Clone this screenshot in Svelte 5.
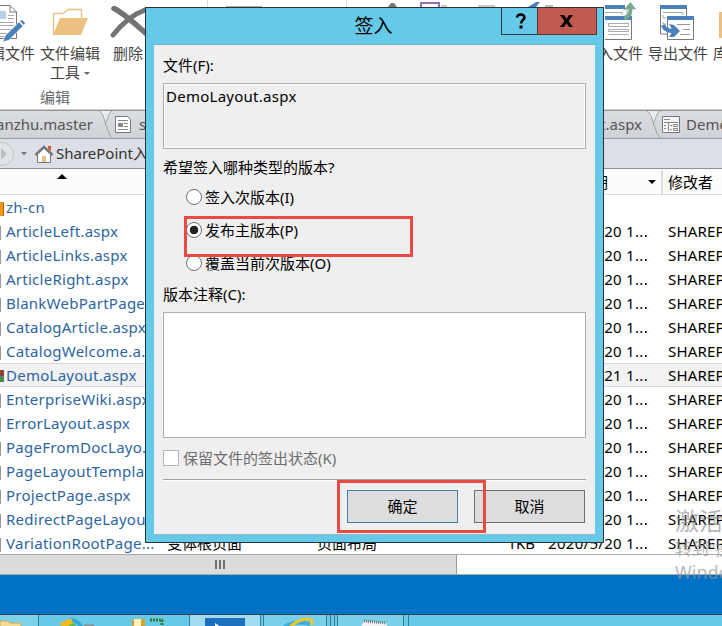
<script lang="ts">
	type Row = { name: string; kind?: string; day?: string };

	const rows: Row[] = [
		{ name: 'zh-cn', kind: 'folder' },
		{ name: 'ArticleLeft.aspx', day: '20' },
		{ name: 'ArticleLinks.aspx', day: '20' },
		{ name: 'ArticleRight.aspx', day: '20' },
		{ name: 'BlankWebPartPage...', day: '20' },
		{ name: 'CatalogArticle.aspx', day: '20' },
		{ name: 'CatalogWelcome.a...', day: '20' },
		{ name: 'DemoLayout.aspx', kind: 'selected', day: '21' },
		{ name: 'EnterpriseWiki.aspx', day: '20' },
		{ name: 'ErrorLayout.aspx', day: '20' },
		{ name: 'PageFromDocLayo...', day: '20' },
		{ name: 'PageLayoutTempla...', day: '20' },
		{ name: 'ProjectPage.aspx', day: '20' },
		{ name: 'RedirectPageLayou...', day: '20' },
		{ name: 'VariationRootPage...', day: '20' }
	];

	const versions = [
		{ value: 'minor', label: '签入次版本(I)' },
		{ value: 'major', label: '发布主版本(P)' },
		{ value: 'overwrite', label: '覆盖当前次版本(O)' }
	];

	let version = $state('major');
	let comment = $state('');
</script>

<div class="screen">
	<div class="ribbon">
		<div class="tool edit-file">
			<svg width="28" height="42" viewBox="0 0 28 42">
				<path d="M-4 5.500H10L16.500 12V38.500H-4" fill="#fff" stroke="#777" />
				<path d="M10 5.500V12H16.500" fill="none" stroke="#777" />
				<path d="M0 11H6V19H0z" fill="#b9cfe8" />
				<path d="M8 15.500H14M8 18.500H14M0 22.500H14M0 25.500H14M0 29.500H12M0 33.500H8M0 36.500H4" stroke="#aaa" />
				<path d="M5 36L19 22L23 26L9 40L3 42z" fill="#4a80bb" stroke="#fff" stroke-width=".5" />
				<path d="M20 21L22 20L25 23L24 25z" fill="#4a80bb" />
			</svg>
			<span>编辑文件</span>
		</div>
		<div class="tool edit-tools">
			<svg width="38" height="42" viewBox="0 0 38 42">
				<path d="M2.500 34V13.500H12L17 9.500H30.500V18" fill="none" stroke="#eac181" stroke-width="1.300" />
				<path d="M9 18H37L30 35H2z" fill="#eac181" />
			</svg>
			<span>文件编辑<br />工具<i class="caret"></i></span>
			<span class="group">编辑</span>
		</div>
		<div class="tool delete">
			<svg width="42" height="42" viewBox="0 0 42 42">
				<path d="M5 8.500C15 13 27 25 40 36" fill="none" stroke="#737373" stroke-width="5.500" stroke-linecap="round" />
				<path d="M4 35C12 25 22 15 36 10" fill="none" stroke="#737373" stroke-width="5" stroke-linecap="round" />
			</svg>
			<span>删除</span>
		</div>
		<div class="hidden-tools">
			<svg width="432" height="8" viewBox="0 0 432 8">
				<path d="M52.500 0V8M191.500 0V8" stroke="#ddd" />
				<path d="M71 6.500H107" stroke="#aaa" />
				<path d="M229 7H233L236 3H239L242 7H247" fill="#777" />
				<path d="M266 8V3H284V8" fill="none" stroke="#9a6bbd" stroke-width="2" />
				<path d="M286 6H292M323 6H340" stroke="#999" />
				<path d="M373 7L381 2H385L381 7z" fill="#4a80bb" />
				<path d="M390 6H398" stroke="#777" />
			</svg>
		</div>
		<div class="tool import">
			<svg width="36" height="42" viewBox="0 0 36 42">
				<path d="M0 5H20V9H0z" fill="#4a80bb" />
				<path d="M0 12.500H17V15M22 9V16" fill="none" stroke="#aaa" />
				<path d="M-2 16.500H26.500V39.500H-2z" fill="#fff" stroke="#777" />
				<path d="M0 16H27V20H0z" fill="#4a80bb" />
				<path d="M3.500 23.500H23.500V26.500H3.500zM3.500 29.500H23.500V31.500H3.500zM3.500 34.500H23.500" fill="none" stroke="#aaa" />
				<path d="M19 18C25 17 25.500 13 25.500 8" fill="none" stroke="#77a892" stroke-width="4" />
				<path d="M18.500 10L25.500 2L31.500 10L28 9H23z" fill="#77a892" />
			</svg>
			<span>导入文件</span>
		</div>
		<div class="tool export">
			<svg width="38" height="42" viewBox="0 0 38 42">
				<path d="M2.500 5.500H28.500V34H2.500z" fill="#fff" stroke="#777" />
				<path d="M2 5H29V9H2z" fill="#4a80bb" />
				<path d="M5 12.500H25V15M5 15V18H8M5 22V24H8M5 29H8" fill="none" stroke="#aaa" />
				<path d="M9.500 16.500H35.500V39.500H9.500z" fill="#fff" stroke="#777" />
				<path d="M9 16H36V20H9z" fill="#4a80bb" />
				<path d="M19 24.500H32M25 29.500H32M22 34.500H32" stroke="#999" />
				<path d="M5 25C7 31 13 31 17 31" fill="none" stroke="#4a80bb" stroke-width="4" />
				<path d="M11 24L16 25L22 31L16 37H11L15 31z" fill="#4a80bb" />
			</svg>
			<span>导出文件</span>
		</div>
		<div class="tool library">
			<div class="lib-icon"></div>
			<span>库</span>
		</div>
	</div>

	<div class="tabs">
		<div class="tab first"><span>shanzhu.master</span></div>
		<svg class="notch" width="15" height="28" viewBox="0 0 15 28">
			<path d="M0 0H13L7 11z" fill="#ebedf0" />
			<path d="M0 0C4 2 5 8 7 14C9 20 11 26 14 27.500M13 0C9 2 9 9 6.500 12" fill="none" stroke="#999da3" />
		</svg>
		<div class="tab second">
			<svg width="18" height="19" viewBox="0 0 18 19">
				<path d="M1.500 1.500H13.500L16.500 4.500V17.500H1.500z" fill="#fff" stroke="#777" />
				<path d="M4 5.500H14M4 14.500H14M10 8.500H14M10 11.500H14" stroke="#888" />
				<path d="M4 8H9V12H4z" fill="#888" />
			</svg>
			<span>s</span>
		</div>
		<div class="tab third"><span>Layout.aspx</span></div>
		<svg class="notch" width="15" height="28" viewBox="0 0 15 28">
			<path d="M0 0H13L7 11z" fill="#ebedf0" />
			<path d="M0 0C4 2 5 8 7 14C9 20 11 26 14 27.500M13 0C9 2 9 9 6.500 12" fill="none" stroke="#999da3" />
		</svg>
		<div class="tab fourth">
			<svg width="18" height="19" viewBox="0 0 18 19">
				<path d="M.5 1.500H17.500V17.500H.5z" fill="#f7f7f7" stroke="#777" />
				<path d="M2 4.500H8M2 7.500H16M6.500 8V16M2 10.500H4M2 13.500H4M8 10.500H10M8 14.500H10M11.500 9.500H15.500V11.500H11.500zM11.500 13.500H15.500V15.500H11.500z" fill="none" stroke="#888" />
			</svg>
			<span>DemoLayout</span>
		</div>
	</div>

	<div class="crumbs">
		<svg width="56" height="28" viewBox="0 0 56 28">
			<circle cx="2" cy="14" r="11.500" fill="#e0e3e6" stroke="#c2c4c7" />
			<path d="M1 8L7 14L1 20z" fill="#bbbdc0" />
			<path d="M21 12H27L24 15.500z" fill="#777" />
			<path d="M48 6H51V11L48 9z" fill="#dc5a32" />
			<path d="M37.500 13L44 7L50.500 13V22.500H37.500z" fill="#fff" stroke="#777" />
			<path d="M35.500 15L44 7L52.500 15" fill="none" stroke="#777" stroke-width="2.500" />
			<path d="M42 16H46V22H42z" fill="#eac181" />
		</svg>
		<span>SharePoint入</span>
	</div>

	<div class="list-head">
		<div class="head-name"><i class="sort"></i></div>
		<div class="head-date"><span>修改日期</span><i class="drop"></i></div>
		<div class="head-user">修改者</div>
	</div>

	<div class="list">
		{#each rows as row}
			<div class="row {row.kind ?? ''}">
				<div class="icon"></div>
				<div class="name">{row.name}</div>
				{#if row.day}
					<div class="title">变体根页面</div>
					<div class="type">页面布局</div>
					<div class="size">1KB</div>
					<div class="date">2020/5/{row.day} 1...</div>
					<div class="user">SHAREPOINT</div>
				{/if}
			</div>
		{/each}
	</div>

	<div class="scrollbar">
		<div class="thumb"><i></i><i></i><i></i></div>
	</div>
	<div class="desktop"></div>
	<div class="taskbar">
		<svg width="722" height="12" viewBox="0 0 722 12">
			<path d="M0 0H38V12H0z" fill="#7dd2eb" />
			<path d="M190 0H260V12H190z" fill="#9fdcf2" />
			<path d="M264 0H326V12H264zM338 0H403V12H338z" fill="#79d0ea" />
			<path d="M38.500 0V12M189.500 0V12M260.500 0V12M263.500 0V12M326.500 0V12M330.500 0V12M334.500 0V12M337.500 0V12M403.500 0V12M408.500 0V12" stroke="#367b91" />
			<path d="M0 6H8L10 8H21V12H0z" fill="#f3dd95" stroke="#c8a957" />
			<path d="M68 12C64 6 71 4 77 12z" fill="#63b74c" />
			<path d="M70 5C74 5 79 7 81 12" fill="none" stroke="#31a8d6" stroke-width="4" />
			<path d="M58 6C63 11 64 3 72 4L73 8L66 12H62z" fill="#f2b91f" />
			<path d="M84 10.500H94" stroke="#8b8b91" stroke-width="2" />
			<path d="M132 5Q138 2 145 5V12H132z" fill="#d6a32b" />
			<path d="M134 4H141V12H134z" fill="#fff0bd" />
			<path d="M150 5H163M162 5V10" stroke="#397a32" stroke-width="3" stroke-dasharray="2 1" />
			<path d="M205 3H245V12H205z" fill="#1d70bd" />
			<path d="M215 8L221 12H215z" fill="#fff" />
			<path d="M284 12Q296 5 310 9" fill="none" stroke="#3caedc" stroke-width="4" />
			<path d="M290 12C298 4 309 2 312 6V10" fill="none" stroke="#f2c62b" stroke-width="3" />
			<path d="M364 6L386 8L388 12H361z" fill="#f2f2f2" />
			<path d="M364 6L386 8" stroke="#727a7d" stroke-width="3" stroke-dasharray="1 1" />
		</svg>
	</div>

	<div class="watermark">
		<div class="big">激活 Windows</div>
		<div>转到“操作中心”</div>
		<div class="last">Windows</div>
	</div>

	<div class="dialog">
		<div class="titlebar">
			<span class="caption">签入</span>
			<div class="controls">
				<button class="help" aria-label="Help">
					<svg width="12" height="16" viewBox="0 0 12 16">
						<path d="M2 4.500C2 .5 9.500 .5 9.500 4.500C9.500 7 6 7 6 10.500" fill="none" stroke="#000" stroke-width="2.600" />
						<path d="M4.500 12.500H7.500V15.500H4.500z" />
					</svg>
				</button>
				<button class="close" aria-label="Close">
					<svg width="13" height="12" viewBox="0 0 13 12">
						<path d="M0 0H4L6.500 3.700L9 0H13L8.500 6L13 12H9L6.500 8.300L4 12H0L4.500 6z" />
					</svg>
				</button>
			</div>
		</div>
		<div class="body">
			<div class="label file-label">文件(F):</div>
			<div class="file-box">DemoLayout.aspx</div>
			<div class="label question">希望签入哪种类型的版本?</div>
			<div class="options">
				{#each versions as v}
					<label>
						<input type="radio" name="version" value={v.value} bind:group={version} />
						<span>{v.label}</span>
					</label>
				{/each}
			</div>
			<div class="label comment-label">版本注释(C):</div>
			<textarea bind:value={comment}></textarea>
			<label class="keep">
				<input type="checkbox" disabled />
				<span>保留文件的签出状态(K)</span>
			</label>
			<div class="buttons">
				<button class="ok">确定</button>
				<button>取消</button>
			</div>
		</div>
		<div class="mark mark-option"></div>
		<div class="mark mark-ok"></div>
	</div>
</div>

<style>
	:global(body) {
		margin: 0;
		overflow: hidden;
	}
	.screen,
	.screen * {
		box-sizing: border-box;
	}
	.screen {
		position: relative;
		width: 722px;
		height: 626px;
		overflow: hidden;
		background: #fff;
		display: flex;
		flex-direction: column;
		font-family: 'Noto Sans', 'Noto Sans CJK SC', sans-serif;
		font-size: 15px;
		line-height: 20px;
		color: #000;
		white-space: nowrap;
	}
	.screen > div {
		flex-shrink: 0;
	}
	svg {
		display: block;
		flex-shrink: 0;
	}
	button {
		font: inherit;
		padding: 0;
		border: 0;
	}
	.ribbon {
		height: 110px;
		border-bottom: 1px solid #d2d2d2;
		display: flex;
		color: #444;
	}
	.tool {
		flex-shrink: 0;
		display: flex;
		flex-direction: column;
		align-items: center;
		font-family: 'Noto Sans CJK SC', sans-serif;
	}
	.tool span {
		margin-top: 1px;
		line-height: 19px;
		text-align: center;
	}
	.edit-file {
		width: 35px;
		align-items: flex-start;
	}
	.edit-file span {
		margin-left: -25px;
	}
	.edit-tools {
		width: 70px;
	}
	.tool .group {
		margin: 6px 0 0 -30px;
		color: #666;
	}
	.delete {
		width: 40px;
	}
	.delete svg {
		margin-left: 10px;
	}
	.delete span {
		margin-left: 6px;
	}
	.caret {
		display: inline-block;
		margin: 0 0 3px 4px;
		border: 3px solid transparent;
		border-top-color: #666;
		border-bottom: 0;
	}
	.hidden-tools {
		width: 439px;
		padding-left: 10px;
	}
	.import {
		width: 62px;
		align-items: flex-end;
	}
	.import svg {
		margin-right: 5px;
	}
	.import span {
		margin-right: 3px;
	}
	.export {
		width: 64px;
	}
	.export svg {
		margin-left: -2px;
	}
	.library {
		width: 22px;
		align-items: flex-start;
		padding-left: 3px;
	}
	.lib-icon {
		width: 10px;
		height: 26px;
		margin: 12px 0 4px 6px;
		background: #eac181;
	}
	.tabs {
		height: 29px;
		display: flex;
		border-top: 1px solid #8d9094;
		border-bottom: 1px solid #999da3;
		background: linear-gradient(#dadde1, #cfd2d7);
		color: #555;
	}
	.tab {
		flex-shrink: 0;
		display: flex;
		align-items: center;
		overflow: hidden;
	}
	.tab span,
	.crumbs span {
		padding-bottom: 2px;
	}
	.first {
		width: 99px;
		justify-content: flex-end;
		padding-right: 6px;
	}
	.second {
		width: 426px;
		gap: 7px;
	}
	.third {
		width: 107px;
		justify-content: flex-end;
		padding-right: 5px;
	}
	.fourth {
		gap: 6px;
	}
	.crumbs {
		height: 30px;
		display: flex;
		align-items: center;
		border-bottom: 1px solid #8d9094;
		background: #dcdfe5;
		color: #333;
	}
	.list-head {
		height: 26px;
		display: flex;
		align-items: center;
		border-bottom: 1px solid #ddd;
		background: #fcfcfc;
	}
	.head-name {
		width: 543px;
		height: 100%;
	}
	.sort {
		display: block;
		width: 0;
		margin: 5px 0 0 57px;
		border: 5px solid transparent;
		border-top: 0;
		border-bottom-color: #000;
	}
	.head-date {
		width: 120px;
		height: 24px;
		display: flex;
		align-items: center;
		justify-content: space-between;
		padding: 0 5px 0 5px;
		border-right: 2px solid #ddd;
	}
	.drop {
		border: 4px solid transparent;
		border-top-color: #000;
		border-bottom: 0;
	}
	.head-user {
		padding-left: 5px;
	}
	.list {
		height: 359px;
		overflow: hidden;
	}
	.row {
		height: 24px;
		display: grid;
		grid-template-columns: 6px 161px 150px 168px 50px 133px 100px;
		line-height: 25px;
	}
	.name {
		color: #2d65a0;
		letter-spacing: 0.26px;
	}
	.size {
		text-align: right;
	}
	.date {
		padding-left: 13px;
		letter-spacing: 0.3px;
	}
	.user {
		letter-spacing: 0.2px;
	}
	.icon {
		width: 1px;
		height: 14px;
		margin-top: 7px;
		background: #999;
	}
	.folder .icon {
		width: 4px;
		background: #e99b18;
		border-right: 1px solid #c55d00;
	}
	.selected {
		background: #f2f2f2;
		box-shadow: inset 0 1px #d8d8d8, inset 0 -1px #d8d8d8;
	}
	.selected .icon {
		width: 4px;
		height: 12px;
		background: linear-gradient(#914235 50%, #4b8950 50%);
	}
	.scrollbar {
		height: 21px;
		border-top: 1px solid #aaa;
		border-bottom: 1px solid #aaa;
		background: #fff;
	}
	.thumb {
		width: 457px;
		height: 19px;
		display: flex;
		gap: 2px;
		padding: 5px 0 0 215px;
		background: #dcdcdc;
		border-right: 1px solid #999;
	}
	.thumb i {
		width: 2px;
		height: 9px;
		background: #707070;
	}
	.desktop {
		height: 39px;
		background: #0072c6;
	}
	.taskbar {
		height: 12px;
		background: #66c9e8;
		border-top: 1px solid #31434c;
	}
	.watermark {
		position: absolute;
		left: 675px;
		top: 506px;
		color: rgba(150, 150, 150, 0.7);
		font-size: 17px;
		line-height: 25px;
	}
	.watermark .big {
		font-size: 24px;
		line-height: 30px;
	}
	.watermark .last {
		font-size: 18px;
		line-height: 22px;
	}
	.dialog {
		position: absolute;
		left: 145px;
		top: 7px;
		width: 459px;
		height: 536px;
		padding: 0 8px 8px;
		border: 1px solid #2d3236;
		background: #66c9e8;
	}
	.titlebar {
		height: 36px;
		display: grid;
		grid-template-columns: 1fr auto 1fr;
	}
	.caption {
		grid-column: 2;
		margin-left: -2px;
		font-size: 19px;
		line-height: 37px;
	}
	.controls {
		display: flex;
		justify-content: flex-end;
		margin-right: -2px;
	}
	.controls button {
		height: 27px;
		display: flex;
		align-items: center;
		justify-content: center;
		border: 1px solid #2d3b40;
		border-top: 0;
		background: #66c9e8;
	}
	.controls .help {
		width: 36px;
		padding-left: 3px;
		border-right: 0;
	}
	.controls .close {
		width: 60px;
		padding-right: 2px;
		background: #c15a4f;
		border-color: #5e312c;
	}
	.body {
		height: 491px;
		padding: 10px 9px 0;
		border-top: 1px solid #77aeca;
		border-bottom: 1px solid #91b9ca;
		background: #efefef;
	}
	.file-label {
		height: 28px;
	}
	.file-box {
		height: 66px;
		padding: 2px;
		border: 1px solid #abadb3;
		box-shadow: inset 0 0 0 1px #fff;
		letter-spacing: 0.26px;
	}
	.question {
		margin-top: 8px;
	}
	.options {
		display: flex;
		flex-direction: column;
		gap: 13px;
		padding: 10px 0 0 23px;
	}
	label {
		height: 20px;
		display: flex;
		align-items: center;
	}
	input {
		appearance: none;
		width: 16px;
		height: 16px;
		margin: 0 4px 0 0;
		border: 1px solid #707070;
		background: #fff;
	}
	input[type='radio'] {
		margin-right: 3px;
		border-radius: 50%;
	}
	input[type='radio']:checked {
		background: radial-gradient(circle, #222 4px, #fff 4.6px);
	}
	.comment-label {
		margin-top: 11px;
	}
	textarea {
		display: block;
		width: 100%;
		height: 126px;
		margin-top: 8px;
		border: 1px solid #abadb3;
		border-radius: 0;
		background: #fff;
		resize: none;
		outline: none;
	}
	.keep {
		height: 42px;
		padding-bottom: 1px;
		color: #6d6d6d;
		border-bottom: 1px solid #a0a0a0;
		box-shadow: 0 1px #fff;
	}
	.keep input {
		border-color: #b5b5b5;
	}
	.buttons {
		display: flex;
		justify-content: flex-end;
		gap: 16px;
		padding: 10px 1px 0 0;
	}
	.buttons button {
		width: 111px;
		height: 33px;
		padding-bottom: 2px;
		border: 1px solid #707070;
		background: #ddd;
		color: #000;
	}
	.buttons .ok {
		border-color: #3c7fb1;
	}
	.mark {
		position: absolute;
		border: 3px solid #e94b43;
		pointer-events: none;
	}
	.mark-option {
		left: 38px;
		top: 208px;
		width: 229px;
		height: 41px;
	}
	.mark-ok {
		left: 191px;
		top: 472px;
		width: 149px;
		height: 53px;
	}
</style>
